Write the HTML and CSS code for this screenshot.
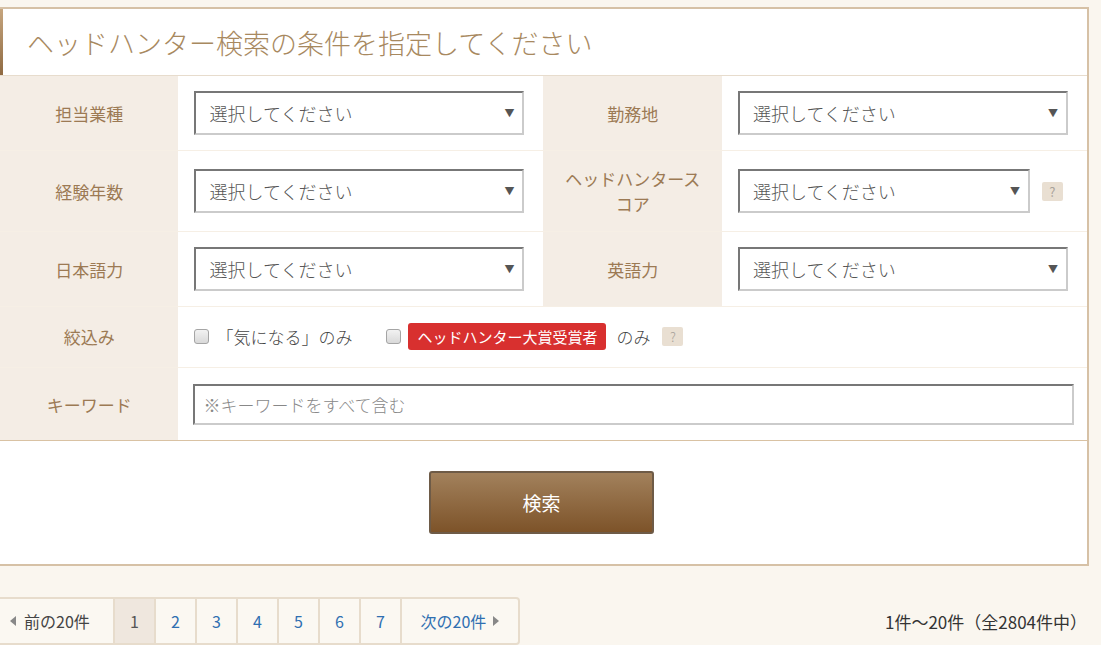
FILE: index.html
```html
<!DOCTYPE html>
<html lang="ja">
<head>
    <meta charset="UTF-8">
    <title>ヘッドハンター検索</title>
    <link rel="stylesheet" href="styles.css">
</head>
<body>

<div class="search-panel">
    <h2 class="panel-title">ヘッドハンター検索の条件を指定してください</h2>

    <table class="search-table">
        <tr class="row-select">
            <th>担当業種</th>
            <td><div class="select-box">選択してください<span class="arrow">▼</span></div></td>
            <th>勤務地</th>
            <td><div class="select-box">選択してください<span class="arrow">▼</span></div></td>
        </tr>
        <tr class="row-select">
            <th>経験年数</th>
            <td><div class="select-box">選択してください<span class="arrow">▼</span></div></td>
            <th>ヘッドハンタースコア</th>
            <td>
                <div class="with-help">
                    <div class="select-box short">選択してください<span class="arrow">▼</span></div>
                    <span class="help">?</span>
                </div>
            </td>
        </tr>
        <tr class="row-select">
            <th>日本語力</th>
            <td><div class="select-box">選択してください<span class="arrow">▼</span></div></td>
            <th>英語力</th>
            <td><div class="select-box">選択してください<span class="arrow">▼</span></div></td>
        </tr>
        <tr class="row-filter">
            <th>絞込み</th>
            <td colspan="3">
                <div class="filters">
                    <label class="check"><span class="box"></span>「気になる」のみ</label>
                    <label class="check"><span class="box"></span><span class="award">ヘッドハンター大賞受賞者</span>のみ</label>
                    <span class="help">?</span>
                </div>
            </td>
        </tr>
        <tr class="row-keyword">
            <th>キーワード</th>
            <td colspan="3"><div class="keyword-box">※キーワードをすべて含む</div></td>
        </tr>
    </table>

    <div class="submit-area">
        <button class="search-btn">検索</button>
    </div>
</div>

<div class="result-bar">
    <ul class="pager">
        <li class="prev"><span class="tri-left"></span>前の20件</li>
        <li class="current">1</li>
        <li>2</li>
        <li>3</li>
        <li>4</li>
        <li>5</li>
        <li>6</li>
        <li>7</li>
        <li class="next">次の20件<span class="tri-right"></span></li>
    </ul>
    <div class="count">1件～20件（全2804件中）</div>
</div>

</body>
</html>
```

FILE: styles.css
```css
body {
    margin: 0;
    padding: 7px 0 0;
    background-color: #faf6ef;
    font-family: "Noto Sans CJK JP", "Noto Sans", sans-serif;
    color: #333;
}

.search-panel {
    width: 1087px;
    background-color: #fff;
    border-top: 2px solid #d6c1a6;
    border-right: 2px solid #d6c1a6;
    border-bottom: 2px solid #d6c1a6;
}

.panel-title {
    margin: 0;
    height: 66px;
    padding-left: 27px;
    display: flex;
    align-items: center;
    font-size: 27px;
    font-weight: 300;
    color: #a8895f;
    background: linear-gradient(#c6a57e, #8f6a42) left top / 3px 100% no-repeat, #fff;
    border-bottom: 1px solid #e7dccd;
}

.search-table {
    width: 100%;
    border-collapse: collapse;
    border-bottom: 1px solid #d9c2a3;
}

.search-table th,
.search-table td {
    border-top: 1px solid #f6efe5;
    padding: 15px 16px;
    vertical-align: middle;
}

.search-table tr:first-child th,
.search-table tr:first-child td {
    border-top: none;
}

.search-table th {
    background-color: #f4ede5;
    color: #9c7a54;
    font-size: 17px;
    font-weight: normal;
    line-height: 25px;
    text-align: center;
}

.search-table th:first-child {
    width: 145px;
}

.search-table th:nth-child(3) {
    width: 149px;
    padding: 15px 14px;
}

.search-table td {
    width: 330px;
}

.row-select th,
.row-select td {
    height: 44px;
}

.row-filter th,
.row-filter td {
    padding-top: 16px;
    padding-bottom: 17px;
}

.row-keyword th,
.row-keyword td {
    padding-top: 16px;
}

.row-keyword td {
    padding-left: 15px;
    padding-right: 13px;
}

.select-box {
    position: relative;
    box-sizing: border-box;
    width: 330px;
    height: 44px;
    padding: 0 13px;
    display: flex;
    align-items: center;
    font-size: 18px;
    font-weight: 300;
    color: #555;
    background-color: #fff;
    border: 2px solid #cbcbcb;
    border-top-color: #777;
    border-left-color: #777;
}

.select-box.short {
    width: 292px;
}

.arrow {
    position: absolute;
    right: 8px;
    top: 12px;
    font-size: 10px;
    color: #555;
}

.with-help {
    display: flex;
    align-items: center;
    gap: 12px;
}

.help {
    display: inline-flex;
    align-items: center;
    justify-content: center;
    width: 21px;
    height: 19px;
    border-radius: 2px;
    background-color: #e9dfd2;
    color: #a8a29a;
    font-size: 13px;
}

.filters {
    display: flex;
    align-items: center;
    height: 27px;
    font-size: 17px;
    font-weight: 300;
    color: #444;
}

.check {
    display: flex;
    align-items: center;
    margin-right: 34px;
}

.check:nth-child(2) {
    margin-right: 12px;
}

.box {
    box-sizing: border-box;
    width: 15px;
    height: 15px;
    margin-right: 7px;
    border: 1px solid #a5a5a5;
    border-radius: 3px;
    background: linear-gradient(#f2f2f2, #d9d9d9);
}

.award {
    display: inline-flex;
    align-items: center;
    height: 27px;
    padding: 0 9px;
    margin-right: 10px;
    border-radius: 3px;
    background-color: #d8302f;
    color: #fff;
    font-size: 15px;
    font-weight: normal;
}

.keyword-box {
    box-sizing: border-box;
    height: 41px;
    padding: 0 8px;
    display: flex;
    align-items: center;
    font-size: 17px;
    font-weight: 300;
    color: #888;
    border: 2px solid #cbcbcb;
    border-top-color: #777;
    border-left-color: #777;
}

.submit-area {
    display: flex;
    justify-content: center;
    padding: 30px 0 30px;
}

.search-btn {
    width: 225px;
    height: 63px;
    border: 2px solid #6e5b47;
    border-radius: 3px;
    background: linear-gradient(#a2815c, #7d5329);
    color: #fff;
    font-family: inherit;
    font-size: 19px;
    margin-right: 4px;
}

.result-bar {
    display: flex;
    justify-content: space-between;
    align-items: center;
    margin-top: 31px;
    padding-right: 14px;
}

.pager {
    display: flex;
    margin: 0;
    padding: 0;
    list-style: none;
    border: 2px solid #e7dccc;
    border-left: none;
    border-radius: 0 4px 4px 0;
    background-color: #fbf8f2;
}

.pager li {
    width: 39px;
    height: 44px;
    display: flex;
    align-items: center;
    justify-content: center;
    border-left: 2px solid #e7dccc;
    font-size: 16px;
    color: #2f6fb1;
}

.pager li.prev {
    width: 103px;
    padding-left: 10px;
    justify-content: flex-start;
    border-left: none;
    color: #444;
    gap: 8px;
}

.pager li.current {
    background-color: #efe7de;
    color: #555;
}

.pager li.next {
    width: 116px;
    gap: 7px;
}

.tri-left {
    width: 0;
    height: 0;
    border-top: 5px solid transparent;
    border-bottom: 5px solid transparent;
    border-right: 6px solid #888;
}

.tri-right {
    width: 0;
    height: 0;
    border-top: 5px solid transparent;
    border-bottom: 5px solid transparent;
    border-left: 6px solid #888;
}

.count {
    font-size: 17px;
    color: #333;
}
```
